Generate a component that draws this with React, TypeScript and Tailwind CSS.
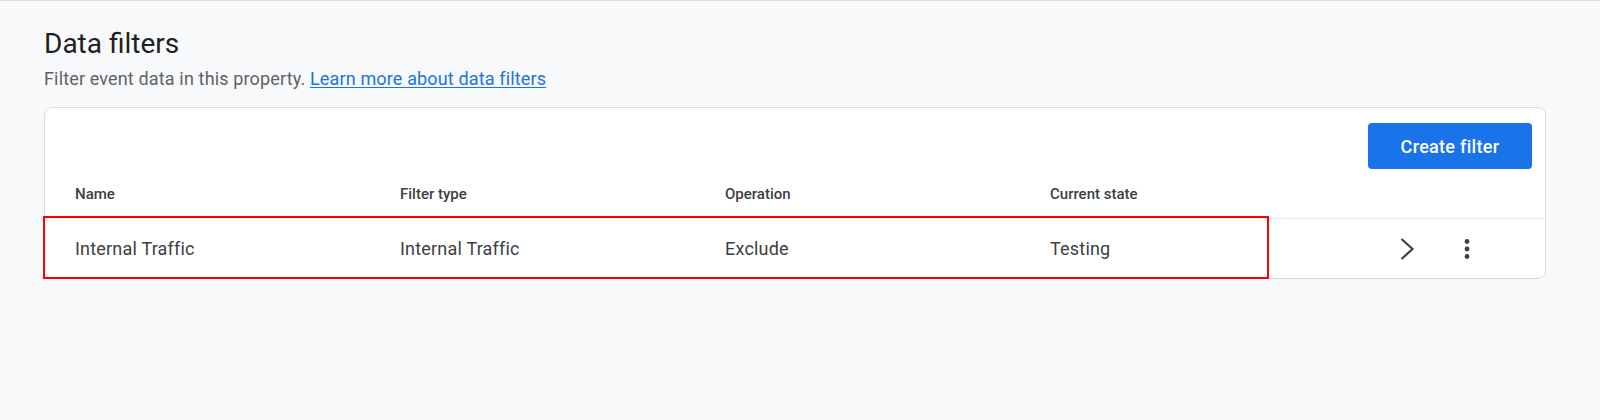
const columns = ['Name', 'Filter type', 'Operation', 'Current state'];
const row = ['Internal Traffic', 'Internal Traffic', 'Exclude', 'Testing'];

function ChevronRight() {
  return (
    <svg width="24" height="24" viewBox="0 0 24 24" fill="none">
      <polyline points="6.5,2 17.5,12 6.5,22" stroke="#3c4043" strokeWidth="2.2" />
    </svg>
  );
}

function MoreVert() {
  return (
    <svg width="24" height="24" viewBox="0 0 24 24" fill="#3c4043">
      <circle cx="12" cy="4.5" r="2.4" />
      <circle cx="12" cy="12" r="2.4" />
      <circle cx="12" cy="19.5" r="2.4" />
    </svg>
  );
}

export default function App() {
  return (
    <div className="min-h-[420px] border-t border-[#dadce0] bg-[#f8f9fa] pl-[44px] pr-[54px] pt-[25px] font-['Roboto','Liberation_Sans',sans-serif]">
      <h1 className="text-[28px] leading-[36px] font-normal text-[#202124]">Data filters</h1>
      <p className="mt-[5px] text-[18px] leading-[24px] tracking-[0.15px] text-[#5f6368]">
        Filter event data in this property.{' '}
        <a href="#" className="text-[#1a73e8] underline underline-offset-2">
          Learn more about data filters
        </a>
      </p>
      <div className="mt-[16px] rounded-lg border border-[#dadce0] bg-white">
        <div className="flex justify-end pt-[15px] pr-[13px]">
          <button
            type="button"
            className="h-[46px] w-[164px] rounded-[4px] bg-[#1a73e8] text-[18px] font-medium tracking-[0.3px] text-white"
          >
            Create filter
          </button>
        </div>
        <div className="grid h-[50px] grid-cols-[325px_325px_325px_325px_1fr] items-center border-b border-[#e8eaed] pl-[30px]">
          {columns.map((c) => (
            <div key={c} className="text-[15px] leading-[20px] font-medium text-[#3c4043]">
              {c}
            </div>
          ))}
          <div />
        </div>
        <div className="relative grid h-[59px] grid-cols-[325px_325px_325px_325px_1fr] items-center pl-[30px]">
          {row.map((v, i) => (
            <div key={i} className="text-[18px] leading-[24px] tracking-[0.2px] text-[#3c4043]">
              {v}
            </div>
          ))}
          <div className="flex justify-end gap-[12px] pr-[54px]">
            <button type="button" className="flex h-[40px] w-[48px] items-center justify-center">
              <ChevronRight />
            </button>
            <button type="button" className="flex h-[40px] w-[48px] items-center justify-center">
              <MoreVert />
            </button>
          </div>
          <div className="pointer-events-none absolute -left-[2px] -top-[3px] h-[63px] w-[1226px] border-2 border-[#ff0000]" />
        </div>
      </div>
    </div>
  );
}
